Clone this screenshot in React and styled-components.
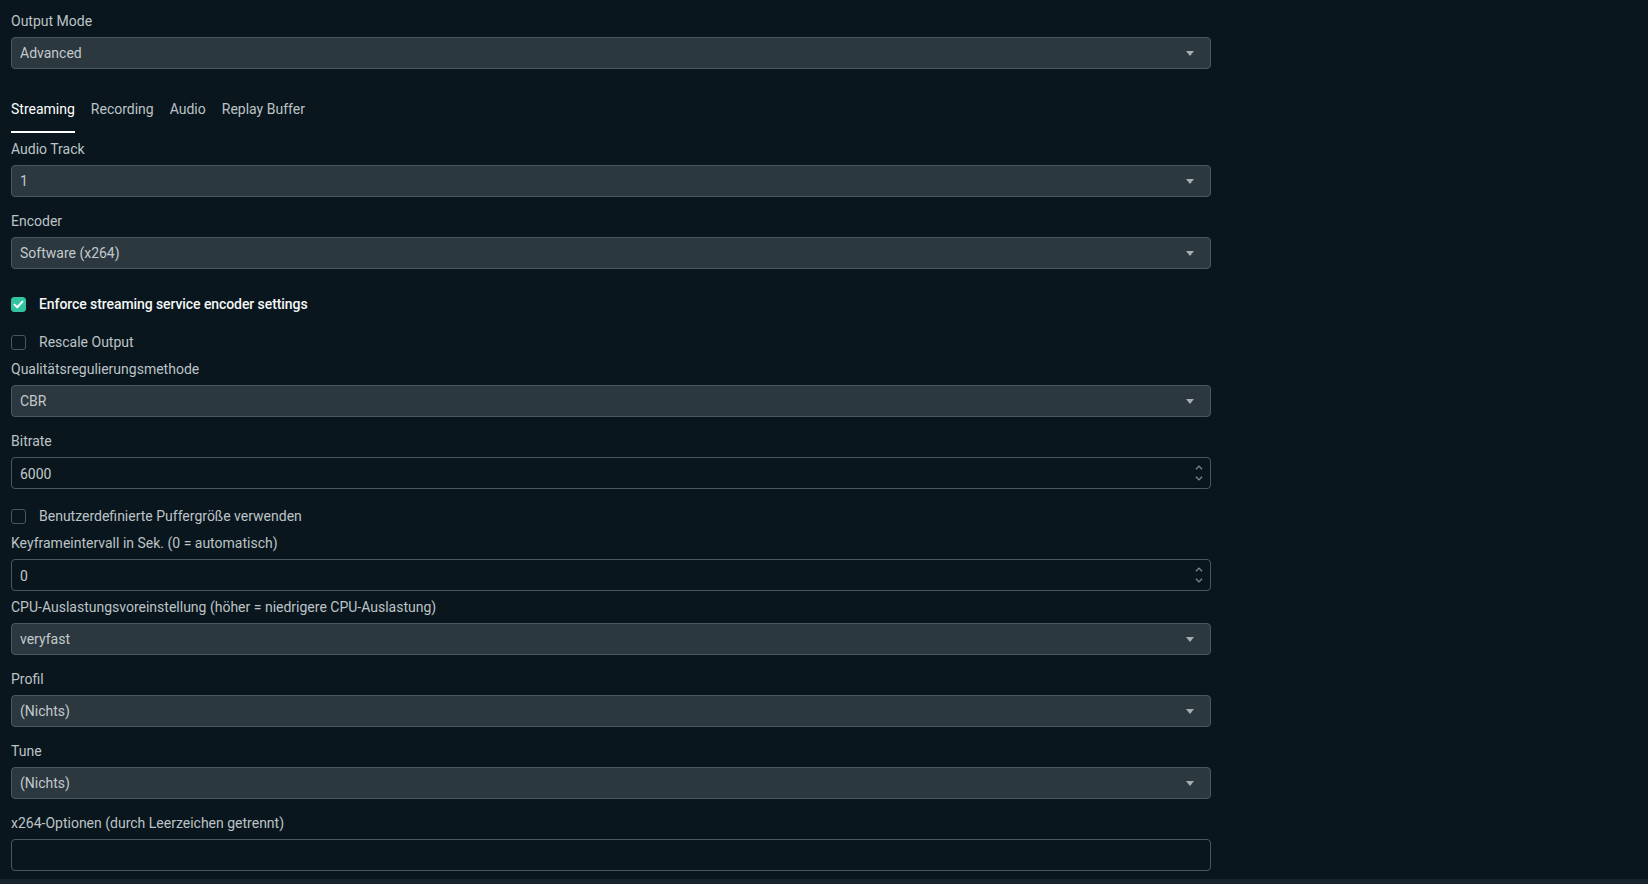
import React from "react";
import styled, { createGlobalStyle } from "styled-components";

const Global = createGlobalStyle`
  html, body { margin: 0; padding: 0; background: #09161d; }
  body { font-family: Roboto, "Noto Sans", sans-serif; font-size: 14px; color: #bdc3c7; }
  * { box-sizing: border-box; }
`;

const Page = styled.div`
  width: 1648px;
  height: 884px;
  background: #09161d;
  display: flex;
  flex-direction: column;
  overflow: hidden;
`;

const Content = styled.div`
  flex: 1;
  padding: 11px 437px 0 11px;
  display: flex;
  flex-direction: column;
`;

const Footer = styled.div`
  height: 5px;
  background: #17242d;
`;

const Group = styled.div`
  display: flex;
  flex-direction: column;
  gap: 6px;
  margin-top: ${(p) => p.$mt || 0}px;
`;

const Label = styled.div`
  line-height: 20px;
  height: 20px;
  color: #bdc3c7;
  white-space: nowrap;
`;

const SelectBox = styled.div`
  height: 32px;
  background: #2b383f;
  border: 1px solid #4a5760;
  border-radius: 4px;
  display: flex;
  align-items: center;
  padding: 0 16px 0 8px;
  color: #c4c9cc;
  justify-content: space-between;
`;

const InputBox = styled.div`
  height: 32px;
  background: #09161d;
  border: 1px solid #4a5760;
  border-radius: 4px;
  display: flex;
  align-items: center;
  padding: 2px 7px 0 8px;
  color: #c4c9cc;
  justify-content: space-between;
`;

const Caret = styled.span`
  width: 0;
  height: 0;
  border-left: 4.5px solid transparent;
  border-right: 4.5px solid transparent;
  border-top: 5px solid #a7adb1;
`;

const SpinArrows = styled.span`
  display: flex;
  flex-direction: column;
  gap: 6px;
  margin-top: -2px;
  color: #7f898f;
`;

const Tabs = styled.div`
  display: flex;
  gap: 16px;
  margin-top: 30px;
`;

const Tab = styled.div`
  line-height: 20px;
  padding-bottom: 12px;
  border-bottom: 2px solid ${(p) => (p.$active ? "#ffffff" : "transparent")};
  color: ${(p) => (p.$active ? "#ffffff" : "#bdc3c7")};
  white-space: nowrap;
`;

const CheckRow = styled.label`
  display: flex;
  align-items: center;
  gap: 13px;
  height: 20px;
  margin-top: ${(p) => p.$mt || 0}px;
  color: ${(p) => (p.$checked ? "#f4f6f7" : "#bdc3c7")};
  font-weight: ${(p) => (p.$checked ? 500 : 400)};
  letter-spacing: ${(p) => (p.$checked ? "-0.08px" : "0")};
  white-space: nowrap;
`;

const Box = styled.span`
  width: 15px;
  height: 15px;
  border-radius: 3px;
  flex: none;
  display: flex;
  align-items: center;
  justify-content: center;
  background: ${(p) => (p.$checked ? "#31c3a2" : "transparent")};
  border: 1px solid ${(p) => (p.$checked ? "#31c3a2" : "#4a5760")};
`;

function Select({ label, value, mt }) {
  return (
    <Group $mt={mt}>
      <Label>{label}</Label>
      <SelectBox>
        <span>{value}</span>
        <Caret />
      </SelectBox>
    </Group>
  );
}

function Spin({ label, value, mt }) {
  return (
    <Group $mt={mt}>
      <Label>{label}</Label>
      <InputBox>
        <span>{value}</span>
        <SpinArrows>
          <svg width="8" height="5" viewBox="0 0 8 5">
            <path d="M1 4.3 L4 1.1 L7 4.3" fill="none" stroke="currentColor" strokeWidth="1.3" />
          </svg>
          <svg width="8" height="5" viewBox="0 0 8 5">
            <path d="M1 0.7 L4 3.9 L7 0.7" fill="none" stroke="currentColor" strokeWidth="1.3" />
          </svg>
        </SpinArrows>
      </InputBox>
    </Group>
  );
}

function Text({ label, mt }) {
  return (
    <Group $mt={mt}>
      <Label>{label}</Label>
      <InputBox />
    </Group>
  );
}

function Check({ label, checked, mt }) {
  return (
    <CheckRow $mt={mt} $checked={checked}>
      <Box $checked={checked}>
        {checked && (
          <svg width="11" height="9" viewBox="0 0 11 9">
            <path d="M1.5 4.6 L4.2 7.2 L9.5 1.6" fill="none" stroke="#ffffff" strokeWidth="2" strokeLinecap="round" strokeLinejoin="round" />
          </svg>
        )}
      </Box>
      <span>{label}</span>
    </CheckRow>
  );
}

export default function App() {
  return (
    <Page>
      <Global />
      <Content>
        <Select label="Output Mode" value="Advanced" />
        <Tabs>
          <Tab $active>Streaming</Tab>
          <Tab>Recording</Tab>
          <Tab>Audio</Tab>
          <Tab>Replay Buffer</Tab>
        </Tabs>
        <Select label="Audio Track" value="1" mt={6} />
        <Select label="Encoder" value="Software (x264)" mt={14} />
        <Check label="Enforce streaming service encoder settings" checked mt={25} />
        <Check label="Rescale Output" mt={18} />
        <Select label="Qualitätsregulierungsmethode" value="CBR" mt={7} />
        <Spin label="Bitrate" value="6000" mt={14} />
        <Check label="Benutzerdefinierte Puffergröße verwenden" mt={17} />
        <Spin label="Keyframeintervall in Sek. (0 = automatisch)" value="0" mt={7} />
        <Select label="CPU-Auslastungsvoreinstellung (höher = niedrigere CPU-Auslastung)" value="veryfast" mt={6} />
        <Select label="Profil" value="(Nichts)" mt={14} />
        <Select label="Tune" value="(Nichts)" mt={14} />
        <Text label="x264-Optionen (durch Leerzeichen getrennt)" mt={14} />
      </Content>
      <Footer />
    </Page>
  );
}
